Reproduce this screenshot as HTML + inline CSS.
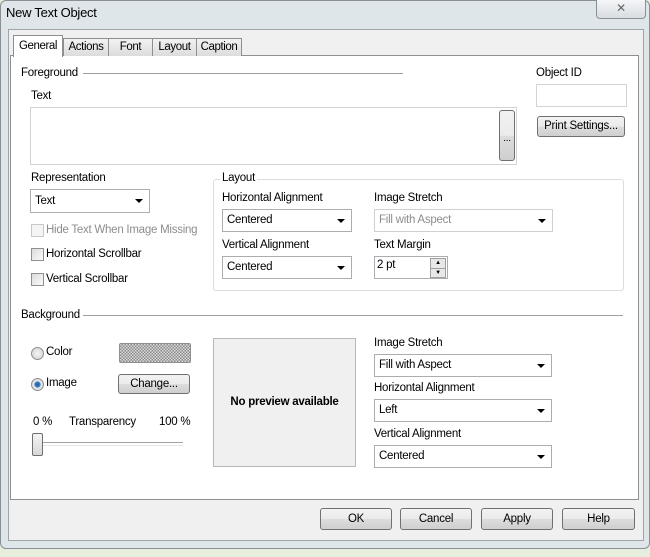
<!DOCTYPE html>
<html><head><style>
body{margin:0;width:650px;height:557px;overflow:hidden;background:#e8eede;font-family:"Liberation Sans",sans-serif;font-size:11.5px;letter-spacing:-0.25px;color:#000;position:relative}
.a{position:absolute;white-space:nowrap}
.frame{position:absolute;left:0;top:0;width:648px;height:547px;background:#dfe6ea;border:1px solid #8a8f94;border-radius:6px}
.client{position:absolute;left:8px;top:29px;width:634px;height:510px;background:#f0f0f0;border:1px solid #a0a4a8}
.page{position:absolute;left:10px;top:55px;width:627px;height:443px;background:#fff;border:1px solid #8e8f8f}
.tab{position:absolute;top:38px;height:17px;border:1px solid #8e8f8f;border-bottom:none;background:linear-gradient(#f2f2f2,#dcdcdc);text-align:center;line-height:17px;letter-spacing:-0.4px}
.btn{position:absolute;border:1px solid #707070;border-radius:3px;background:linear-gradient(#f2f2f2 0,#ebebeb 50%,#dddddd 51%,#cfcfcf 100%);text-align:center;box-sizing:border-box}
.dd{position:absolute;border:1px solid #abadb3;background:#fff;box-sizing:border-box;padding-left:4px}
.dd:after{content:"";position:absolute;right:6px;top:50%;margin-top:-2px;border-left:4px solid transparent;border-right:4px solid transparent;border-top:4px solid #000}
.cb{position:absolute;width:11px;height:11px;border:1px solid #8e8f8f;background:linear-gradient(135deg,#dcdcdc,#fafafa)}
.rad{position:absolute;width:11px;height:11px;border:1px solid #8e8f8f;border-radius:50%;background:radial-gradient(#f4f4f4,#d0d0d0)}
.line{position:absolute;height:1px;background:#a0a0a0}
</style></head><body>
<div class="frame"></div>
<div class="a" style="left:6px;top:5px;font-size:13px">New Text Object</div>
<div class="a" style="left:596px;top:0;width:48px;height:18px;border:1px solid #8a8f94;border-top:none;border-radius:0 0 4px 4px;background:linear-gradient(#f4f6f8,#d8dde2);text-align:center;line-height:16px;color:#666;font-size:12px">✕</div>
<div class="client"></div>
<div class="page"></div>
<div class="tab" style="left:13px;top:35px;height:21px;width:48px;background:#fff;line-height:20px;z-index:2">General</div>
<div class="tab" style="left:63px;width:44px">Actions</div>
<div class="tab" style="left:108px;width:43px">Font</div>
<div class="tab" style="left:152px;width:43px">Layout</div>
<div class="tab" style="left:196px;width:44px">Caption</div>

<div class="a" style="left:21px;top:67px">Foreground</div>
<div class="line" style="left:83px;top:73px;width:320px"></div>
<div class="a" style="left:536px;top:67px">Object ID</div>
<div class="a" style="left:536px;top:84px;width:89px;height:21px;border:1px solid #d0d4d8;background:#fff"></div>
<div class="btn" style="left:537px;top:116px;width:88px;height:21px;line-height:19px">Print Settings...</div>
<div class="a" style="left:31px;top:90px">Text</div>
<div class="a" style="left:30px;top:107px;width:485px;height:56px;border:1px solid #d0d4d8;background:#fff"></div>
<div class="btn" style="left:499px;top:110px;width:16px;height:51px;line-height:56px;font-size:10px">...</div>

<div class="a" style="left:31px;top:172px">Representation</div>
<div class="dd" style="left:30px;top:189px;width:120px;height:24px;line-height:22px">Text</div>
<div class="cb" style="left:31px;top:224px;border-color:#c8c8c8;background:#f4f4f4"></div>
<div class="a" style="left:46px;top:224px;color:#8d8d8d">Hide Text When Image Missing</div>
<div class="cb" style="left:31px;top:248px"></div>
<div class="a" style="left:46px;top:248px">Horizontal Scrollbar</div>
<div class="cb" style="left:31px;top:273px"></div>
<div class="a" style="left:46px;top:273px">Vertical Scrollbar</div>

<div class="a" style="left:213px;top:179px;width:409px;height:110px;border:1px solid #dcdcdc;border-radius:3px"></div>
<div class="a" style="left:220px;top:172px;background:#fff;padding:0 2px">Layout</div>
<div class="a" style="left:222px;top:192px">Horizontal Alignment</div>
<div class="dd" style="left:222px;top:209px;width:130px;height:23px;line-height:21px">Centered</div>
<div class="a" style="left:374px;top:192px">Image Stretch</div>
<div class="dd" style="left:374px;top:209px;width:179px;height:23px;line-height:21px;color:#8d8d8d;border-color:#d0d0d0">Fill with Aspect</div>
<div class="a" style="left:222px;top:239px">Vertical Alignment</div>
<div class="dd" style="left:222px;top:256px;width:130px;height:23px;line-height:21px">Centered</div>
<div class="a" style="left:374px;top:239px">Text Margin</div>
<div class="a" style="left:374px;top:256px;width:72px;height:21px;border:1px solid #abadb3;background:#fff"><span style="position:absolute;left:2px;top:2px">2 pt</span><div style="position:absolute;right:1px;top:1px;width:14px;height:9px;border:1px solid #a0a0a0;background:#e8e8e8;font-size:6px;text-align:center;line-height:9px">▲</div><div style="position:absolute;right:1px;top:11px;width:14px;height:8px;border:1px solid #a0a0a0;background:#e8e8e8;font-size:6px;text-align:center;line-height:8px">▼</div></div>

<div class="a" style="left:21px;top:309px">Background</div>
<div class="line" style="left:83px;top:315px;width:540px"></div>
<div class="rad" style="left:31px;top:347px"></div>
<div class="a" style="left:46px;top:346px">Color</div>
<div class="a" style="left:119px;top:343px;width:70px;height:18px;border:1px solid #8e8f8f;border-radius:2px;background:repeating-conic-gradient(#888 0 25%,#ddd 0 50%) 0 0/3px 3px"></div>
<div class="rad" style="left:31px;top:378px;background:radial-gradient(#1a5a9a 0,#3e86c8 35%,#e8e8e8 45%,#d0d0d0 100%)"></div>
<div class="a" style="left:46px;top:377px">Image</div>
<div class="btn" style="left:118px;top:374px;width:72px;height:20px;line-height:18px">Change...</div>
<div class="a" style="left:33px;top:416px">0 %</div>
<div class="a" style="left:69px;top:416px">Transparency</div>
<div class="a" style="left:159px;top:416px">100 %</div>
<div class="a" style="left:38px;top:442px;width:145px;height:2px;border-top:1px solid #a0a0a0;border-bottom:1px solid #e8e8e8"></div>
<div class="a" style="left:32px;top:433px;width:9px;height:21px;border:1px solid #707070;border-radius:2px;background:linear-gradient(#f4f4f4,#d8d8d8)"></div>
<div class="a" style="left:213px;top:338px;width:141px;height:127px;border:1px solid #b8b8b8;background:#f0f0f0;text-align:center;line-height:127px;font-weight:bold;font-size:11.5px">No preview available</div>
<div class="a" style="left:374px;top:337px">Image Stretch</div>
<div class="dd" style="left:374px;top:354px;width:178px;height:23px;line-height:21px">Fill with Aspect</div>
<div class="a" style="left:374px;top:382px">Horizontal Alignment</div>
<div class="dd" style="left:374px;top:399px;width:178px;height:23px;line-height:21px">Left</div>
<div class="a" style="left:374px;top:428px">Vertical Alignment</div>
<div class="dd" style="left:374px;top:445px;width:178px;height:23px;line-height:21px">Centered</div>

<div class="btn" style="left:320px;top:508px;width:72px;height:22px;line-height:20px">OK</div>
<div class="btn" style="left:400px;top:508px;width:72px;height:22px;line-height:20px">Cancel</div>
<div class="btn" style="left:481px;top:508px;width:72px;height:22px;line-height:20px">Apply</div>
<div class="btn" style="left:562px;top:508px;width:73px;height:22px;line-height:20px">Help</div>
</body></html>
